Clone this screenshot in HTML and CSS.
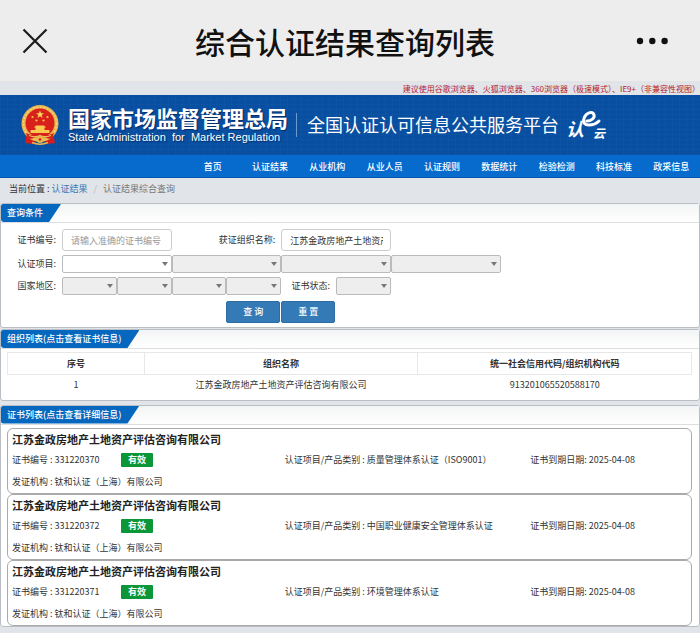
FILE: index.html
```html
<!DOCTYPE html>
<html lang="zh-CN">
<head>
<meta charset="utf-8">
<meta name="viewport" content="width=device-width, initial-scale=1">
<title>综合认证结果查询列表</title>
<link rel="stylesheet" href="styles.css">
</head>
<body>
<header class="appbar">
  <button class="icon-btn" type="button" aria-label="关闭">
    <svg width="26" height="26" viewBox="0 0 26 26"><path d="M1.5 1.5 24.5 24.5M24.5 1.5 1.5 24.5" fill="none" stroke="#1c1c1c" stroke-width="2.2"/></svg>
  </button>
  <h1 class="appbar-title">综合认证结果查询列表</h1>
  <button class="icon-btn icon-more" type="button" aria-label="更多">
    <svg width="32" height="8" viewBox="0 0 32 8"><g fill="#111"><circle cx="4" cy="4" r="3.2"/><circle cx="16.3" cy="4" r="3.2"/><circle cx="28.6" cy="4" r="3.2"/></g></svg>
  </button>
</header>
<p class="tip">建议使用谷歌浏览器、火狐浏览器、360浏览器（极速模式）、IE9+（非兼容性视图）</p>
<div class="banner">
  <svg class="emblem" width="38" height="40" viewBox="0 0 38 40">
    <path d="M6 28 4 38 12 39 15 36 23 36 26 39 34 38 32 28Z" fill="#d3201d"/>
    <circle cx="19" cy="18.500" r="18.500" fill="#e9b44c"/>
    <circle cx="19" cy="18.500" r="16.500" fill="none" stroke="#f6d37c" stroke-width="1.500" stroke-dasharray="2 1.500"/>
    <circle cx="19" cy="18" r="14.500" fill="#d9211c"/>
    <path d="m19 5.500 1 2.800h3l-2.400 1.800.9 2.900-2.500-1.700-2.500 1.700.9-2.900L15 8.300h3z" fill="#ffd95c"/>
    <g fill="#f8c94e"><circle cx="11.500" cy="12" r="1.100"/><circle cx="26.500" cy="12" r="1.100"/><circle cx="15.500" cy="15.500" r="1.100"/><circle cx="22.500" cy="15.500" r="1.100"/>
    <path d="M13 22.500 15 20.500H23L25 22.500H23.500V25H28.500V28H9.500V25H14.500V22.500Z"/></g>
    <path d="M5 28Q12 32 19 29.500 26 32 33 28L31 34Q26 34 23 32 19 35 15 32 12 34 7 34Z" fill="#d3201d"/>
    <path d="M8 30.500Q15 33 19 30.500 23 33 30 30.500M13 35Q19 31 25 35" fill="none" stroke="#f0bd55" stroke-width="1.300"/>
    <circle cx="19" cy="34.500" r="3.500" fill="#edb84e"/><circle cx="19" cy="34.500" r="1.300" fill="#d3201d"/>
    <path d="M11 37.500Q19 41 27 37.500" fill="none" stroke="#edb84e" stroke-width="1.500"/>
  </svg>
  <div class="agency">
    <div class="agency-cn">国家市场监督管理总局</div>
    <div class="agency-en">State Administration&nbsp; for&nbsp; Market Regulation</div>
  </div>
  <div class="platform">全国认证认可信息公共服务平台</div>
  <svg class="cloud" width="44" height="38" viewBox="0 -4 44 38" role="img" aria-label="认e云">
    <text class="cloud-ren" x="-1" y="26">认</text>
    <text class="cloud-yun" x="26" y="28">云</text>
    <path d="M20 11C24 11 28 8 27 5 26 1 20 2 17.500 7 15.500 12 17 15 22 15 27 15 30 13 32 11" fill="none" stroke="#fff" stroke-width="3" stroke-linecap="round"/>
  </svg>
</div>
<nav class="nav">
  <a href="#">首页</a><a href="#">认证结果</a><a href="#">从业机构</a><a href="#">从业人员</a><a href="#">认证规则</a><a href="#">数据统计</a><a href="#">检验检测</a><a href="#">科技标准</a><a href="#">政采信息</a>
</nav>
<div class="crumbs"><span>当前位置 :</span><a href="#">认证结果</a><span class="slash">/</span><span class="here">认证结果综合查询</span></div>

<main>
  <section class="panel">
    <div class="panel-head"><h2 class="tab">查询条件</h2></div>
    <form class="query">
      <label for="certNo">证书编号:</label>
      <input class="two" id="certNo" type="text" placeholder="请输入准确的证书编号">
      <label class="two" for="orgName">获证组织名称:</label>
      <input class="two" id="orgName" type="text" value="江苏金政房地产土地资产评估咨询有限公司">

      <label class="first" for="item1">认证项目:</label>
      <span class="pick two"><select id="item1"><option></option></select></span>
      <span class="pick two"><select aria-label="认证项目二级" disabled><option></option></select></span>
      <span class="pick two"><select aria-label="认证项目三级" disabled><option></option></select></span>
      <span class="pick two"><select aria-label="认证项目四级" disabled><option></option></select></span>

      <label class="first" for="area1">国家地区:</label>
      <span class="pick"><select id="area1" disabled><option></option></select></span>
      <span class="pick"><select aria-label="省" disabled><option></option></select></span>
      <span class="pick"><select aria-label="市" disabled><option></option></select></span>
      <span class="pick"><select aria-label="区县" disabled><option></option></select></span>
      <label for="state">证书状态:</label>
      <span class="pick"><select id="state" disabled><option></option></select></span>

      <button class="btn btn-query" type="submit">查 询</button>
      <button class="btn" type="reset">重 置</button>
    </form>
  </section>

  <section class="panel">
    <div class="panel-head"><h2 class="tab">组织列表(点击查看证书信息)</h2></div>
    <table class="orgs">
      <thead><tr><th class="col-no">序号</th><th>组织名称</th><th>统一社会信用代码/组织机构代码</th></tr></thead>
      <tbody><tr><td>1</td><td>江苏金政房地产土地资产评估咨询有限公司</td><td>913201065520588170</td></tr></tbody>
    </table>
  </section>

  <section class="panel panel-certs">
    <div class="panel-head"><h2 class="tab">证书列表(点击查看详细信息)</h2></div>
    <div class="certs">
      <article class="cert">
        <h3>江苏金政房地产土地资产评估咨询有限公司</h3>
        <div class="cert-row"><span>证书编号 : 331220370</span><span><b class="badge">有效</b></span><span>认证项目/产品类别 : 质量管理体系认证（ISO9001）</span><span>证书到期日期: 2025-04-08</span></div>
        <div class="issuer">发证机构 : 钛和认证（上海）有限公司</div>
      </article>
      <article class="cert">
        <h3>江苏金政房地产土地资产评估咨询有限公司</h3>
        <div class="cert-row"><span>证书编号 : 331220372</span><span><b class="badge">有效</b></span><span>认证项目/产品类别 : 中国职业健康安全管理体系认证</span><span>证书到期日期: 2025-04-08</span></div>
        <div class="issuer">发证机构 : 钛和认证（上海）有限公司</div>
      </article>
      <article class="cert">
        <h3>江苏金政房地产土地资产评估咨询有限公司</h3>
        <div class="cert-row"><span>证书编号 : 331220371</span><span><b class="badge">有效</b></span><span>认证项目/产品类别 : 环境管理体系认证</span><span>证书到期日期: 2025-04-08</span></div>
        <div class="issuer">发证机构 : 钛和认证（上海）有限公司</div>
      </article>
    </div>
  </section>
</main>
</body>
</html>
```
FILE: styles.css
```css
* { box-sizing: border-box; }
body {
  margin: 0;
  background: #e1e4e8;
  color: #333;
  font: 9px/14px "Noto Sans CJK SC", sans-serif;
}
h1, h2, h3, p { margin: 0; }
a { text-decoration: none; }
button, input, select { font: inherit; color: inherit; margin: 0; }

.appbar {
  display: grid;
  grid-template-columns: 1fr auto 1fr;
  align-items: center;
  height: 82px;
  padding: 0 32px 0 22px;
  background: #ededed;
  border-bottom: 1px solid #e3e3e4;
}
.appbar-title { font-size: 30px; line-height: 44px; font-weight: 500; color: #111; }
.icon-btn { display: flex; padding: 0; border: 0; background: none; }
.icon-more { justify-self: end; }

.tip { height: 13px; font-size: 8px; line-height: 13px; text-align: right; color: #b3202c; }

.banner {
  display: flex;
  align-items: center;
  height: 60px;
  padding-left: 21px;
  color: #fff;
  background:
    repeating-linear-gradient(90deg, rgba(255,255,255,.02) 0 1px, transparent 1px 7px),
    repeating-linear-gradient(0deg, rgba(255,255,255,.02) 0 1px, transparent 1px 5px),
    #084fa1;
}
.emblem { flex: none; margin-right: 9px; }
.agency { padding-right: 8px; text-shadow: 1px 1px 1px rgba(0,20,70,.6); white-space: nowrap; }
.agency-cn { font-size: 22px; line-height: 28px; font-weight: 700; }
.agency-en { padding-bottom: 4px; font: 11px/12px "Liberation Sans", sans-serif; }
.platform {
  height: 24px;
  padding: 0 8px 0 10px;
  border-left: 1px solid #6d9bd0;
  font-size: 18px;
  line-height: 22px;
  white-space: nowrap;
}
.cloud { flex: none; }
.cloud text { fill: #fff; font-style: italic; font-weight: 700; }
.cloud-ren { font-size: 18px; }
.cloud-yun { font-size: 12px; }

.nav {
  display: grid;
  grid-template-columns: repeat(9, 1fr);
  padding-left: 184px;
  background: #076bcd;
  border-bottom: 1px solid #0558ab;
}
.nav a { color: #fff; font-weight: 500; line-height: 22px; padding-top: 1px; height: 22px; text-align: center; }

.crumbs { display: flex; height: 25px; padding-left: 9px; line-height: 22px; gap: 2px; }
.crumbs a { color: #337ab7; }
.slash { padding: 0 4px; color: #bbb; }
.here { color: #777; }

main { display: flex; flex-direction: column; gap: 1px; }
.panel { background: #fff; border: 1px solid #b9bec5; border-radius: 3px; }
.panel-certs { margin-top: 3px; }
.panel-head { height: 19px; border-bottom: 1px solid #dcdee1; background: linear-gradient(#f3f4f5, #fff); }
.tab {
  width: max-content;
  padding: 0 18px 0 6px;
  font-size: 9px;
  line-height: 18px;
  font-weight: 500;
  color: #fff;
  background: #0567bd;
  border-radius: 2px 0 0 3px;
  clip-path: polygon(0 0, 100% 0, calc(100% - 12px) 100%, 0 100%);
}

.query {
  display: grid;
  grid-template-columns: 61px repeat(11, 1fr);
  row-gap: 4px;
  align-items: center;
  padding: 6px 34px 4px 0;
}
.query label { padding-right: 6px; text-align: right; white-space: nowrap; }
.query .first { grid-column: 1; }
.query .two { grid-column: span 2; }
.query input {
  width: 100%;
  min-width: 0;
  height: 22px;
  padding: 0 7px 0 8px;
  border: 1px solid #ccc;
  border-radius: 3px;
  background: #fff;
}
.query input::placeholder { color: #999; }
.pick { position: relative; display: flex; }
.pick::after {
  content: "";
  position: absolute;
  right: 4px;
  top: 7px;
  border: 3px solid transparent;
  border-top: 4px solid #777;
  border-bottom: 0;
}
.pick select {
  appearance: none;
  width: 100%;
  height: 18px;
  padding: 0;
  border: 1px solid #bbb;
  border-radius: 2px;
  background: #fff;
}
.pick select:disabled { background: #eee; opacity: 1; }
.btn {
  height: 22px;
  margin: 2px 1px 0 0;
  padding: 0;
  border: 1px solid #2e6da4;
  border-radius: 2px;
  background: #337ab7;
  color: #fff;
  font-weight: 500;
}
.btn-query { grid-column: 5; }

.orgs {
  width: calc(100% - 13px);
  margin: 3px 7px 4px 6px;
  border-collapse: collapse;
  table-layout: fixed;
  text-align: center;
}
.orgs th { height: 22px; padding: 0; border: 1px solid #e8e8e8; font-weight: 700; color: #333; }
.orgs td { height: 21px; padding: 0; }
.col-no { width: 20%; }

.certs { padding: 3px 7px 0 6px; }
.cert { padding: 0 4px; border: 1px solid #aaa; border-radius: 6px; }
.cert h3 { font-size: 11px; line-height: 20px; font-weight: 700; color: #222; }
.cert-row { display: grid; grid-template-columns: 16fr 24fr 36fr 23fr; line-height: 22px; }
.badge {
  display: inline-block;
  padding: 0 7px;
  line-height: 14px;
  font-weight: 700;
  color: #fff;
  background: #0b9638;
  border-radius: 1px;
}
.issuer { line-height: 22px; }
```
